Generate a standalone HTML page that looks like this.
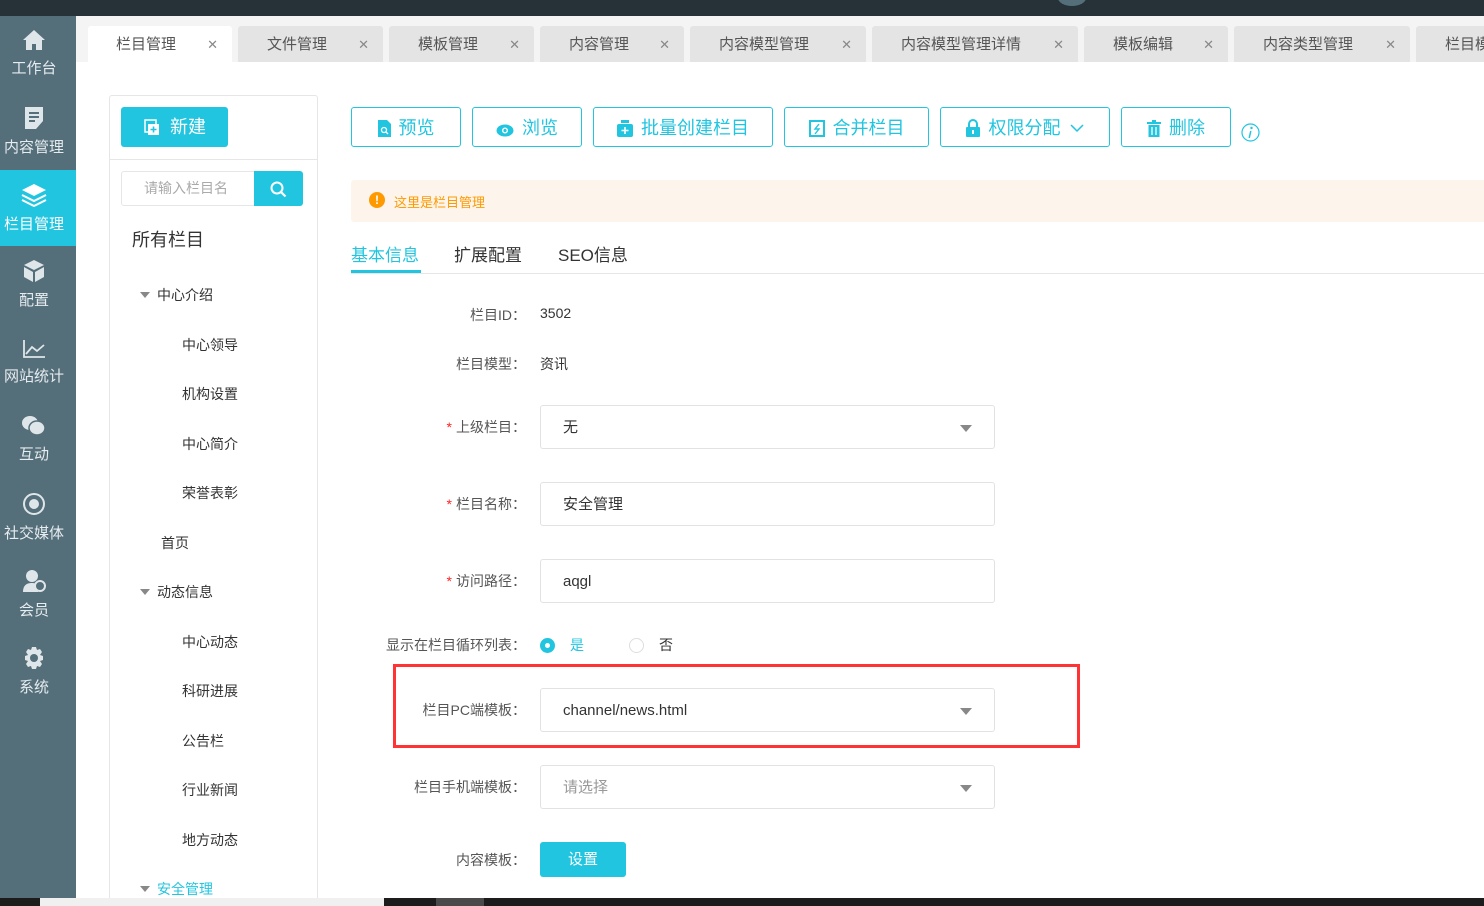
<!DOCTYPE html>
<html><head><meta charset="utf-8"><style>
*{margin:0;padding:0;box-sizing:border-box}
body{width:1484px;height:906px;overflow:hidden;position:relative;background:#fff;font-family:"Liberation Sans","Noto Sans CJK SC",sans-serif;color:#333;font-size:14px}
.a{position:absolute}
.top{left:0;top:0;width:1484px;height:16px;background:#263238}
.side{left:0;top:16px;width:76px;height:882px;background:#546e7a}
.si{position:absolute;left:0;width:68px;text-align:center;color:#e6ecef;font-size:15px}
.si svg{display:block;margin:0 auto 6px}
.tabs{left:76px;top:16px;width:1408px;height:46px;background:#f4f4f4}
.tab{position:absolute;top:10px;height:36px;background:#e4e4e4;border-radius:3px 3px 0 0;font-size:15px;color:#555;line-height:38px}
.tab .x{position:absolute;right:14px;top:0;font-size:13px;color:#888}
.btn{position:absolute;top:107px;height:40px;border:1px solid #22c5e0;border-radius:3px;color:#22c5e0;font-size:18px;line-height:40px;text-align:center}
.btn svg{vertical-align:-3px;margin-right:8px}
.lbl{position:absolute;width:300px;left:226px;text-align:right;font-size:14px;color:#555}
.lbl b{color:#f22;font-weight:normal;margin-right:4px}
.inp{position:absolute;left:540px;width:455px;height:44px;border:1px solid #e2e2e2;border-radius:3px;padding-left:22px;line-height:44px;font-size:15px;color:#333}
.tri{position:absolute;right:22px;top:19px;width:0;height:0;border-left:6px solid transparent;border-right:6px solid transparent;border-top:7px solid #888}
.tree{position:absolute;font-size:14px;color:#333}
.arr{display:inline-block;width:0;height:0;border-left:5px solid transparent;border-right:5px solid transparent;border-top:6px solid #888;margin-right:7px;vertical-align:2px}
</style></head><body>
<div class="a top"></div>
<div class="a" style="left:1058px;top:-10px;width:28px;height:16px;border-radius:50%;background:#546e7a"></div>
<div class="a side"></div>
<div class="a" style="left:0;top:170px;width:76px;height:76px;background:#22c5e0"></div>

<div class="si" style="top:29px"><svg width="24" height="22" viewBox="0 0 24 22"><path d="M12 1L1 11h3v10h6v-6h4v6h6V11h3z" fill="#dfe6e9"/></svg>工作台</div>
<div class="si" style="top:106px"><svg width="22" height="24" viewBox="0 0 22 24"><path d="M2 1h18v14l-7 8H2z" fill="#dfe6e9"/><path d="M6 7h10M6 11h10M6 15h6" stroke="#546e7a" stroke-width="2"/></svg>内容管理</div>
<div class="si" style="top:183px;color:#fff"><svg width="26" height="24" viewBox="0 0 26 24"><path d="M13 1L1 7l12 6 12-6z" fill="#fff"/><path d="M1 12l12 6 12-6M1 17l12 6 12-6" stroke="#fff" stroke-width="2" fill="none"/></svg>栏目管理</div>
<div class="si" style="top:259px"><svg width="24" height="24" viewBox="0 0 24 24"><path d="M12 1L2 6l10 5 10-5z M2 8v10l9 5V13z M22 8v10l-9 5V13z" fill="#dfe6e9"/></svg>配置</div>
<div class="si" style="top:339px"><svg width="24" height="20" viewBox="0 0 24 20"><path d="M2 1v17h21M4 15l6-7 5 4 7-6" stroke="#dfe6e9" stroke-width="1.8" fill="none"/></svg>网站统计</div>
<div class="si" style="top:415px"><svg width="26" height="22" viewBox="0 0 26 22"><ellipse cx="9" cy="8" rx="8" ry="7" fill="#dfe6e9"/><ellipse cx="16" cy="13" rx="8" ry="7" fill="#dfe6e9" stroke="#546e7a" stroke-width="1.5"/></svg>互动</div>
<div class="si" style="top:492px"><svg width="24" height="24" viewBox="0 0 24 24"><circle cx="12" cy="12" r="10" stroke="#dfe6e9" stroke-width="2" fill="none"/><circle cx="12" cy="12" r="5" fill="#dfe6e9"/></svg>社交媒体</div>
<div class="si" style="top:569px"><svg width="24" height="24" viewBox="0 0 24 24"><circle cx="10" cy="7" r="6" fill="#dfe6e9"/><path d="M1 23c0-7 4-9 9-9s6 2 6 2v7z" fill="#dfe6e9"/><circle cx="18" cy="17" r="5" fill="#546e7a" stroke="#dfe6e9" stroke-width="2"/></svg>会员</div>
<div class="si" style="top:646px"><svg width="24" height="24" viewBox="0 0 24 24"><path d="M10 1h4l1 3 3-1 2 3-2 3 3 1v4l-3 1 2 3-2 3-3-1-1 3h-4l-1-3-3 1-2-3 2-3-3-1v-4l3-1-2-3 2-3 3 1z" fill="#dfe6e9"/><circle cx="12" cy="12" r="4" fill="#546e7a"/></svg>系统</div>

<div class="a tabs"></div>
<div class="tab" style="left:88px;top:26px;width:144px;background:#fff"><span style="margin-left:28px">栏目管理</span><span class="x">✕</span></div>
<div class="tab" style="left:238px;top:26px;width:145px"><span style="margin-left:29px">文件管理</span><span class="x">✕</span></div>
<div class="tab" style="left:389px;top:26px;width:145px"><span style="margin-left:29px">模板管理</span><span class="x">✕</span></div>
<div class="tab" style="left:540px;top:26px;width:144px"><span style="margin-left:29px">内容管理</span><span class="x">✕</span></div>
<div class="tab" style="left:690px;top:26px;width:176px"><span style="margin-left:29px">内容模型管理</span><span class="x">✕</span></div>
<div class="tab" style="left:872px;top:26px;width:206px"><span style="margin-left:29px">内容模型管理详情</span><span class="x">✕</span></div>
<div class="tab" style="left:1084px;top:26px;width:144px"><span style="margin-left:29px">模板编辑</span><span class="x">✕</span></div>
<div class="tab" style="left:1234px;top:26px;width:176px"><span style="margin-left:29px">内容类型管理</span><span class="x">✕</span></div>
<div class="tab" style="left:1416px;top:26px;width:80px;overflow:hidden"><span style="margin-left:29px;white-space:nowrap">栏目模</span></div>

<!-- left panel -->
<div class="a" style="left:109px;top:95px;width:209px;height:810px;border:1px solid #e6e6e6;border-radius:3px"></div>
<div class="a" style="left:121px;top:107px;width:107px;height:40px;background:#22c5e0;border-radius:3px;color:#fff;font-size:18px;line-height:40px"><svg class="a" style="left:23px;top:12px" width="16" height="17" viewBox="0 0 16 17"><rect x="1" y="1" width="11" height="12" fill="none" stroke="#fff" stroke-width="1.5"/><rect x="4" y="5" width="11" height="11" fill="#fff"/><path d="M9.5 7.5v6M6.5 10.5h6" stroke="#22c5e0" stroke-width="1.6"/></svg><span style="margin-left:49px">新建</span></div>
<div class="a" style="left:110px;top:159px;width:207px;height:1px;background:#e6e6e6"></div>
<div class="a" style="left:121px;top:171px;width:134px;height:35px;border:1px solid #e6e6e6;border-radius:3px 0 0 3px;color:#aaa;font-size:14px;line-height:33px;padding-left:22px;white-space:nowrap;overflow:hidden">请输入栏目名</div>
<div class="a" style="left:254px;top:171px;width:49px;height:35px;background:#22c5e0;border-radius:0 3px 3px 0"><svg class="a" style="left:16px;top:10px" width="17" height="17" viewBox="0 0 17 17"><circle cx="7" cy="7" r="5.5" stroke="#fff" stroke-width="2" fill="none"/><path d="M11 11l4.5 4.5" stroke="#fff" stroke-width="2.2"/></svg></div>
<div class="a" style="left:132px;top:226px;font-size:18px;color:#333">所有栏目</div>
<div class="tree" style="left:140px;top:285px"><span class="arr"></span>中心介绍</div>
<div class="tree" style="left:182px;top:335px">中心领导</div>
<div class="tree" style="left:182px;top:384px">机构设置</div>
<div class="tree" style="left:182px;top:434px">中心简介</div>
<div class="tree" style="left:182px;top:483px">荣誉表彰</div>
<div class="tree" style="left:161px;top:533px">首页</div>
<div class="tree" style="left:140px;top:582px"><span class="arr"></span>动态信息</div>
<div class="tree" style="left:182px;top:632px">中心动态</div>
<div class="tree" style="left:182px;top:681px">科研进展</div>
<div class="tree" style="left:182px;top:731px">公告栏</div>
<div class="tree" style="left:182px;top:780px">行业新闻</div>
<div class="tree" style="left:182px;top:830px">地方动态</div>
<div class="tree" style="left:140px;top:879px;color:#22c5e0"><span class="arr"></span>安全管理</div>

<!-- toolbar -->
<div class="btn" style="left:351px;width:110px"><svg width="13" height="17" viewBox="0 0 13 17"><path d="M0 0h9l4 4v13H0z" fill="#22c5e0"/><circle cx="6" cy="10" r="2.5" stroke="#fff" stroke-width="1.3" fill="none"/><path d="M8 12l2 2" stroke="#fff" stroke-width="1.3"/></svg>预览</div>
<div class="btn" style="left:472px;width:110px"><svg width="18" height="13" viewBox="0 0 18 13"><ellipse cx="9" cy="6.5" rx="8.5" ry="6" fill="#22c5e0"/><circle cx="9" cy="6.5" r="3" fill="#fff"/><circle cx="9" cy="6.5" r="1.6" fill="#22c5e0"/></svg>浏览</div>
<div class="btn" style="left:593px;width:180px"><svg width="16" height="17" viewBox="0 0 16 17"><rect x="4" y="0" width="8" height="3" fill="#22c5e0"/><rect x="0" y="4" width="16" height="13" rx="2" fill="#22c5e0"/><path d="M8 7v7M4.5 10.5h7" stroke="#fff" stroke-width="1.6"/></svg>批量创建栏目</div>
<div class="btn" style="left:784px;width:145px"><svg width="16" height="17" viewBox="0 0 16 17"><rect x="0" y="0" width="16" height="17" fill="#22c5e0"/><rect x="2" y="2" width="12" height="13" fill="#fff"/><path d="M10 4l-4 5h4l-4 5" stroke="#22c5e0" stroke-width="1.4" fill="none"/></svg>合并栏目</div>
<div class="btn" style="left:940px;width:170px"><svg width="14" height="18" viewBox="0 0 14 18"><path d="M3 8V5a4 4 0 0 1 8 0v3" stroke="#22c5e0" stroke-width="2" fill="none"/><rect x="0" y="8" width="14" height="10" rx="1" fill="#22c5e0"/><rect x="6" y="11" width="2" height="4" fill="#fff"/></svg>权限分配 <svg width="14" height="9" viewBox="0 0 14 9" style="margin:0 0 0 4px;vertical-align:1px"><path d="M1 1l6 6 6-6" stroke="#22c5e0" stroke-width="1.5" fill="none"/></svg></div>
<div class="btn" style="left:1121px;width:110px"><svg width="14" height="17" viewBox="0 0 14 17"><rect x="0" y="2" width="14" height="2" fill="#22c5e0"/><rect x="5" y="0" width="4" height="2" fill="#22c5e0"/><rect x="1.5" y="5" width="11" height="12" fill="#22c5e0"/><path d="M5 7v8M9 7v8" stroke="#fff" stroke-width="1.3"/></svg>删除</div>
<svg class="a" style="left:1241px;top:123px" width="19" height="19" viewBox="0 0 19 19"><circle cx="9.5" cy="9.5" r="8.5" stroke="#22c5e0" stroke-width="1.2" fill="none"/><circle cx="10.5" cy="5" r="1.2" fill="#22c5e0"/><path d="M9.8 8l-1.6 7" stroke="#22c5e0" stroke-width="1.5"/></svg>

<div class="a" style="left:351px;top:180px;width:1140px;height:42px;background:#fdf5ec;border-radius:3px"></div>
<div class="a" style="left:369px;top:192px;width:16px;height:16px;border-radius:50%;background:#f90;color:#fff;font-size:12px;font-weight:bold;text-align:center;line-height:16px">!</div>
<div class="a" style="left:394px;top:192px;font-size:13px;color:#f90">这里是栏目管理</div>

<div class="a" style="left:351px;top:273px;width:1133px;height:1px;background:#e6e6e6"></div>
<div class="a" style="left:351px;top:241px;font-size:17px;color:#22c5e0">基本信息</div>
<div class="a" style="left:351px;top:270px;width:70px;height:3px;background:#22c5e0"></div>
<div class="a" style="left:454px;top:241px;font-size:17px;color:#333">扩展配置</div>
<div class="a" style="left:558px;top:241px;font-size:17px;color:#333">SEO信息</div>

<!-- form -->
<div class="lbl" style="top:305px">栏目ID：</div><div class="a" style="left:540px;top:305px;font-size:14px">3502</div>
<div class="lbl" style="top:354px">栏目模型：</div><div class="a" style="left:540px;top:354px;font-size:14px">资讯</div>
<div class="lbl" style="top:417px"><b>*</b>上级栏目：</div>
<div class="inp" style="top:405px">无<span class="tri"></span></div>
<div class="lbl" style="top:494px"><b>*</b>栏目名称：</div>
<div class="inp" style="top:482px">安全管理</div>
<div class="lbl" style="top:571px"><b>*</b>访问路径：</div>
<div class="inp" style="top:559px">aqgl</div>
<div class="lbl" style="top:635px">显示在栏目循环列表：</div>
<div class="a" style="left:540px;top:638px;width:15px;height:15px;border-radius:50%;background:#22c5e0"><div class="a" style="left:5px;top:5px;width:5px;height:5px;border-radius:50%;background:#fff"></div></div>
<div class="a" style="left:570px;top:635px;color:#22c5e0">是</div>
<div class="a" style="left:629px;top:638px;width:15px;height:15px;border-radius:50%;border:1px solid #ddd"></div>
<div class="a" style="left:659px;top:635px">否</div>

<div class="a" style="left:393px;top:664px;width:687px;height:84px;border:3px solid #f33"></div>
<div class="lbl" style="top:700px">栏目PC端模板：</div>
<div class="inp" style="top:688px">channel/news.html<span class="tri"></span></div>
<div class="lbl" style="top:777px">栏目手机端模板：</div>
<div class="inp" style="top:765px;color:#999">请选择<span class="tri"></span></div>
<div class="lbl" style="top:850px">内容模板：</div>
<div class="a" style="left:540px;top:842px;width:86px;height:35px;background:#22c5e0;border-radius:3px;color:#fff;text-align:center;line-height:35px;font-size:15px">设置</div>

<div class="a" style="left:0;top:898px;width:1484px;height:8px;background:#1c1c1c"></div>
<div class="a" style="left:40px;top:898px;width:344px;height:8px;background:#f0f0f0"></div>
<div class="a" style="left:436px;top:898px;width:48px;height:8px;background:#4a4a4a"></div>
</body></html>
